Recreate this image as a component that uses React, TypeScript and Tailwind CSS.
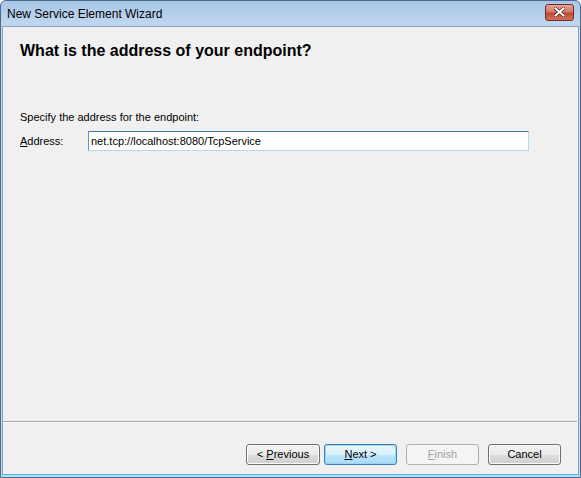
const Btn = ({
  children,
  kind = "normal",
  className = "",
}: {
  children: React.ReactNode;
  kind?: "normal" | "default" | "disabled";
  className?: string;
}) => {
  const base = `w-[73px] h-[21px] rounded-[3px] border flex items-center justify-center text-[11px] leading-none ${className}`;
  if (kind === "disabled")
    return (
      <div className={`${base} border-[#adb2b5] bg-[#f4f4f4] text-[#a0a0a0]`}>
        {children}
      </div>
    );
  if (kind === "default")
    return (
      <div
        className={`${base} border-[#3c7fb1] text-black bg-[linear-gradient(#eaf6fd_0%,#d9f0fc_50%,#bee6fd_51%,#a7d9f5_100%)] shadow-[inset_0_0_0_1px_#9fd5f3]`}
      >
        {children}
      </div>
    );
  return (
    <div
      className={`${base} border-[#707070] text-black bg-[linear-gradient(#f2f2f2_0%,#ebebeb_50%,#dddddd_51%,#cfcfcf_100%)] shadow-[inset_0_0_0_1px_#fcfcfc]`}
    >
      {children}
    </div>
  );
};

export default function App() {
  return (
    <div className="w-[581px] h-[478px] font-['Liberation_Sans',Arial,sans-serif] bg-white">
      <div className="w-full h-full flex flex-col rounded-t-[6px] border border-[#4a6a8f] bg-[linear-gradient(#a9c6e6,#c6dbf1_30px,#c2d9f0)] overflow-hidden">
        {/* title bar */}
        <div className="h-[25px] flex items-center justify-between pl-[6px] pr-[6px] shrink-0">
          <span className="text-[12px] text-black">New Service Element Wizard</span>
          <div className="w-[29px] h-[17px] mt-[-3px] rounded-[3px] border border-[#6b2e2e] bg-[linear-gradient(#e8a493_0%,#d57a66_45%,#c24a30_55%,#d0705a_100%)] flex items-center justify-center">
            <svg width="11" height="10" viewBox="0 0 11 10">
              <path
                d="M1.5 1.5 L9.5 8.5 M9.5 1.5 L1.5 8.5"
                stroke="#4a1f1f"
                strokeWidth="3.4"
                strokeLinecap="square"
              />
              <path
                d="M1.5 1.5 L9.5 8.5 M9.5 1.5 L1.5 8.5"
                stroke="#ffffff"
                strokeWidth="2"
                strokeLinecap="square"
              />
            </svg>
          </div>
        </div>

        {/* client area */}
        <div className="flex-1 mx-[1px] mb-[2px] border border-[#8aa3bd] border-b-[#2ec4ec] bg-[#f0f0f0] flex flex-col">
          <div className="flex-1 flex flex-col">
            <h1 className="mt-[14px] ml-[17px] text-[16px] font-bold text-black leading-[20px]">
              What is the address of your endpoint?
            </h1>
            <p className="mt-[50px] ml-[17px] text-[11px] text-black leading-[13px]">
              Specify the address for the endpoint:
            </p>
            <div className="mt-[7px] ml-[17px] flex items-center">
              <span className="w-[68px] text-[11px] text-black">
                <span className="underline">A</span>ddress:
              </span>
              <div className="w-[441px] h-[20px] border border-[#abadb3] border-t-[#3d7bad] border-l-[#5e97c7] border-r-[#b7d9ed] border-b-[#b7d9ed] bg-white flex items-center pl-[2px] text-[11px] text-black">
                net.tcp://localhost:8080/TcpService
              </div>
            </div>
          </div>
          <div className="h-[2px] border-t border-[#a0a0a0] border-b border-b-white mr-[1px]" />
          <div className="h-[51px] flex items-start justify-end pt-[21px] pr-[17px]">
            <Btn className="w-[74px]">
              &lt;&nbsp;<span className="underline">P</span>revious
            </Btn>
            <Btn kind="default" className="ml-[4px]">
              <span className="underline">N</span>ext &gt;
            </Btn>
            <Btn kind="disabled" className="ml-[9px]">
              <span className="underline">F</span>inish
            </Btn>
            <Btn className="ml-[9px]">Cancel</Btn>
          </div>
        </div>
      </div>
    </div>
  );
}
